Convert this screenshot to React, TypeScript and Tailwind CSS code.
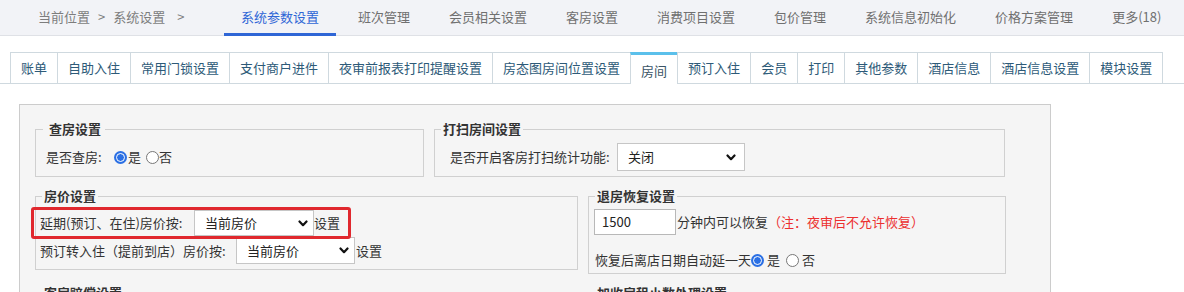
import clsx from 'clsx'

const topTabs = ['系统参数设置', '班次管理', '会员相关设置', '客房设置', '消费项目设置', '包价管理', '系统信息初始化', '价格方案管理', '更多(18)']
const subTabs = ['账单', '自助入住', '常用门锁设置', '支付商户进件', '夜审前报表打印提醒设置', '房态图房间位置设置', '房间', '预订入住', '会员', '打印', '其他参数', '酒店信息', '酒店信息设置', '模块设置']

function Chevron() {
  return (
    <svg width="10" height="7" viewBox="0 0 10 7" className="shrink-0">
      <path d="M1.5 1.5 L5 5.2 L8.5 1.5" fill="none" stroke="#111" strokeWidth="2.2" strokeLinecap="round" strokeLinejoin="round" />
    </svg>
  )
}

function Select({ value, className }: { value: string; className?: string }) {
  return (
    <div className={clsx('flex items-center justify-between bg-white border border-[#c6c6c6] pl-[10px] text-[13px] text-[#222]', className)}>
      <span>{value}</span>
      <Chevron />
    </div>
  )
}

function Radio({ checked, className }: { checked?: boolean; className?: string }) {
  if (checked)
    return (
      <span className={clsx('w-[13px] h-[13px] rounded-full bg-[#2a6fe4] flex items-center justify-center shrink-0', className)}>
        <span className="w-[9px] h-[9px] rounded-full bg-[#2a6fe4] border-[1.5px] border-white" />
      </span>
    )
  return <span className={clsx('w-[13px] h-[13px] rounded-full bg-white border border-[#777] shrink-0', className)} />
}

function Box({ title, className, legendClass, children }: { title: string; className?: string; legendClass?: string; children?: React.ReactNode }) {
  return (
    <fieldset className={clsx('border border-[#d0d0d0]', className)}>
      <legend className={clsx('leading-[18px] text-[13px] font-semibold text-[#333]', legendClass ?? 'ml-[6px] px-[2px]')}>{title}</legend>
      {children}
    </fieldset>
  )
}

export default function App() {
  return (
    <div className="w-[1184px] h-[292px] overflow-hidden bg-white font-['Noto_Sans_CJK_SC',sans-serif] text-[13px] text-[#333]">
      <div className="flex h-[36px] bg-[#f2f3f7] shadow-[inset_0_-1px_0_#dfe1e6]">
        <div className="w-[224px] flex items-center pl-[38px] pb-[3px] text-[#7d7d7d]">
          <span>当前位置</span>
          <span className="mx-[8px]">&gt;</span>
          <span>系统设置</span>
          <span className="ml-[12px]">&gt;</span>
        </div>
        <div className="flex gap-[5px]">
          {topTabs.map((t, i) => (
            <div
              key={t}
              className={clsx(
                'h-[36px] px-[17px] flex items-center border-b-[3px]',
                i === 0 ? 'border-[#2f66d6] text-[#2f66d6]' : 'border-transparent text-[#707070]'
              )}
            >
              {t}
            </div>
          ))}
        </div>
      </div>

      <div className="mt-[16px] h-[32px] flex items-start pl-[10px] border-b border-[#cfd9df]">
        {subTabs.map((t, i) => (
          <div
            key={t}
            className={clsx(
              'flex items-center px-[10px] border-l border-[#cfd9df]',
              t === '房间'
                ? 'h-[32px] -mb-px bg-white border-t-[3px] border-t-[#5bc0eb] pt-[2px] text-[#3a5466]'
                : 'h-[31px] border-t text-[#2d5a78]',
              i === subTabs.length - 1 && 'border-r'
            )}
          >
            {t}
          </div>
        ))}
      </div>

      <div className="mt-[20px] ml-[19px] w-[1032px] h-[300px] border border-[#cccccc] bg-[#f5f5f5] px-[15px] pt-[15px]">
        <div className="flex gap-[10px] items-stretch">
          <Box title="查房设置" className="w-[389px]" legendClass="ml-[7px] pl-[6px] pr-[4px]">
            <div className="flex items-center h-[28px] my-[5px] pl-[10px]">
              <span className="w-[68px]">是否查房:</span>
              <Radio checked />
              <span className="ml-[1px]">是</span>
              <Radio className="ml-[5px]" />
              <span>否</span>
            </div>
          </Box>
          <Box title="打扫房间设置" className="w-[571px]">
            <div className="flex items-center h-[28px] my-[5px] pl-[15px]">
              <span className="w-[167px]">是否开启客房打扫统计功能:</span>
              <Select value="关闭" className="w-[128px] h-[28px] pr-[8px]" />
            </div>
          </Box>
        </div>

        <div className="mt-[10px] flex gap-[10px] items-start">
          <Box title="房价设置" className="w-[543px]">
            <div className="relative pt-[5px] pb-[5px] pl-[4px]">
              <div className="flex items-center h-[26px]">
                <span className="w-[154px]">延期(预订、在住)房价按:</span>
                <Select value="当前房价" className="w-[120px] h-[26px] pr-[5px]" />
                <span>设置</span>
              </div>
              <div className="flex items-center h-[27px] mt-[1px]">
                <span className="w-[196px]">预订转入住（提前到店）房价按:</span>
                <Select value="当前房价" className="w-[119px] h-[27px] pr-[5px]" />
                <span className="ml-[1px]">设置</span>
              </div>
              <div className="absolute left-[-5px] top-[2px] w-[320px] h-[32px] border-[3px] border-[#e0282e] rounded-[3px]" />
            </div>
          </Box>
          <Box title="退房恢复设置" className="w-[418px]">
            <div className="pl-[5px] pt-[4px] pb-[3px]">
              <div className="flex items-center h-[26px]">
                <div className="w-[82px] h-[26px] bg-white border border-[#b8b8b8] flex items-center pl-[7px] text-[#222]">1500</div>
                <span className="ml-[1px]">分钟内可以恢复</span>
                <span className="text-[#ec2f2f]">（注：夜审后不允许恢复）</span>
              </div>
              <div className="flex items-center h-[20px] mt-[15px] pl-[1px]">
                <span>恢复后离店日期自动延一天</span>
                <Radio checked />
                <span className="ml-[3px]">是</span>
                <Radio className="ml-[6px]" />
                <span className="ml-[3px]">否</span>
              </div>
            </div>
          </Box>
        </div>

        <div className="mt-[10px] flex gap-[10px] items-start">
          <Box title="客房赔偿设置" className="w-[543px] h-[80px]" />
          <Box title="加收房租小数处理设置" className="w-[418px] h-[80px]" />
        </div>
      </div>
    </div>
  )
}
